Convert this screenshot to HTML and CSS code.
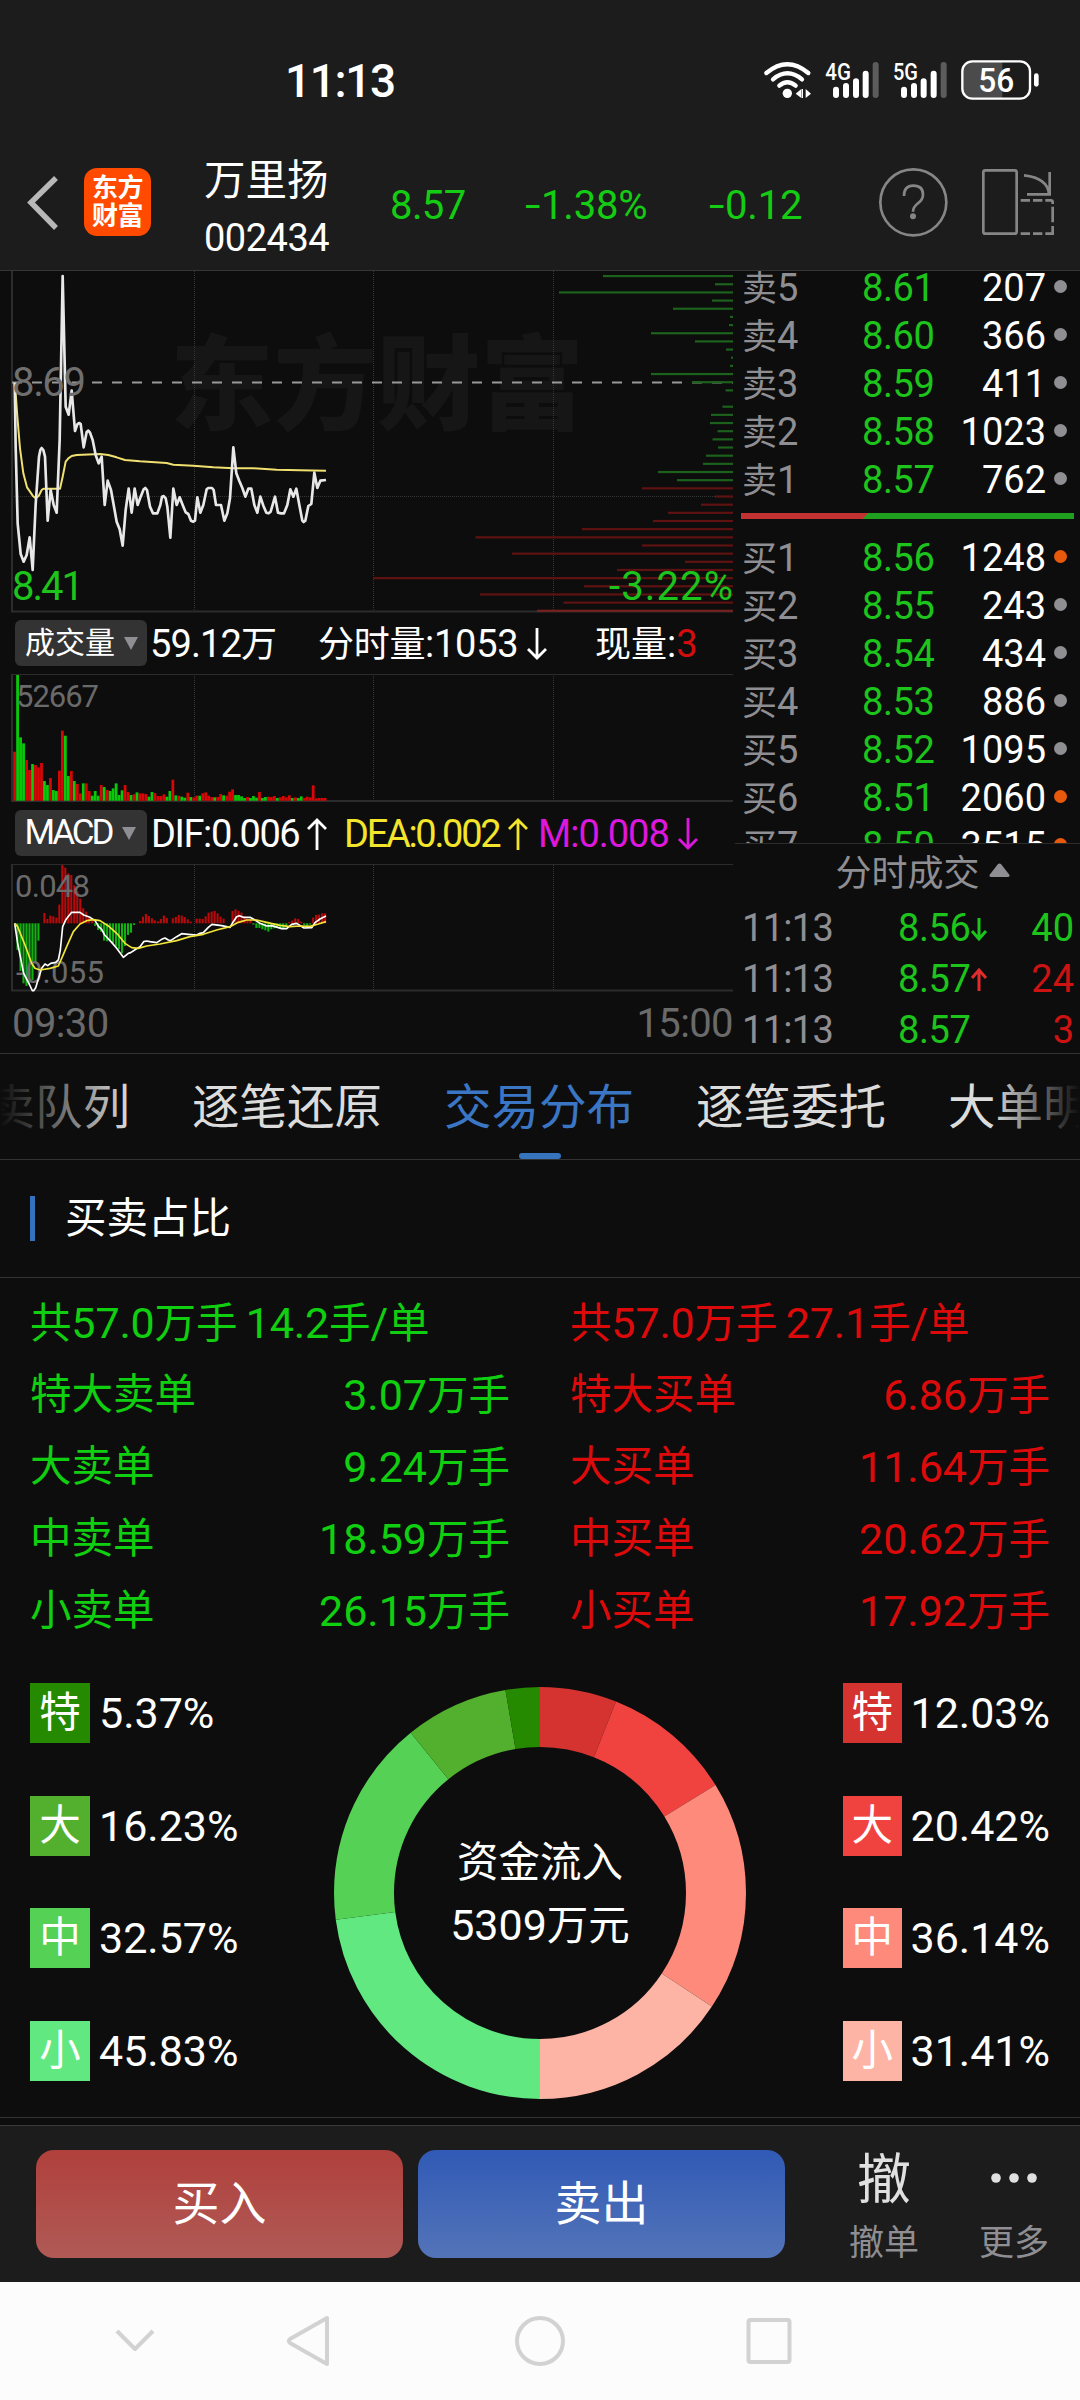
FILE: index.html
```html
<!DOCTYPE html>
<html lang="zh-CN">
<head>
<meta charset="utf-8">
<title>万里扬 002434</title>
<link rel="stylesheet" href="styles.css">
</head>
<body>
<div class="status">
  <span class="clock">11:13</span>
  <svg class="status-icons" viewBox="0 0 870 180">
    <g fill="none" stroke="#fff" stroke-width="13" stroke-linecap="round">
      <path d="M49 69Q112 16 175 69"/><path d="M69 88Q112 52 156 88"/><path d="M88 107Q112 86 137 107"/>
    </g>
    <circle cx="112" cy="130" r="14" fill="#fff"/>
    <path d="M137 131l17-14v27zM167 117l16 14l-16 13z" fill="#fff"/>
    <path d="M157 117v27" stroke="#fff" stroke-width="4"/>
    <g stroke="#fff" stroke-width="18" stroke-linecap="round">
      <path d="M258 119v16M288 108v27M318 94v41M347 71v64M462 119v16M492 108v27M521 94v41M551 71v64"/>
      <path stroke="#5c5c5c" d="M377 45v90M581 45v90"/>
    </g>
    <text class="net" x="226" y="90" textLength="77" lengthAdjust="spacingAndGlyphs">4G</text>
    <text class="net" x="429" y="90" textLength="75" lengthAdjust="spacingAndGlyphs">5G</text>
    <path d="M670 33h87v114h-87q-33 0-33-33v-48q0-33 33-33z" fill="#4b4b4b"/>
    <rect x="637" y="34" width="203" height="112" rx="30" fill="none" stroke="#fff" stroke-width="7"/>
    <path d="M859 77v26" stroke="#fff" stroke-width="14" stroke-linecap="round"/>
    <text class="batt" x="739" y="126" text-anchor="middle" textLength="108" lengthAdjust="spacingAndGlyphs">56</text>
  </svg>
</div>

<header class="head">
  <svg class="back" viewBox="0 0 84 136"><path d="M56 44L31 68.500L56 94" fill="none" stroke="#b8b8b8" stroke-width="5.500"/></svg>
  <div class="logo"><span>东方</span><span>财富</span></div>
  <div class="stock"><span class="name">万里扬</span><span class="code">002434</span></div>
  <span class="quote q1">8.57</span>
  <span class="quote q2"><span>-</span>1.38%</span>
  <span class="quote q3"><span>-</span>0.12</span>
  <svg class="head-icons" viewBox="360 252 630 408" fill="none" stroke="#868686" stroke-width="8">
    <circle cx="490" cy="457" r="99"/>
    <path d="M462 438Q462 407 490 407Q519 407 519 434Q519 448 504 460Q489 472 489 485"/>
    <circle cx="489" cy="499" r="9" fill="#868686" stroke="none"/>
    <rect x="700" y="361" width="100" height="190" rx="6"/>
    <path d="M822 376Q894 384 897 433M899 366V433H831"/>
    <path d="M812 451H840M849 451H877M886 451H902Q908 451 908 457V462M908 470V490M908 490V517M908 528V551H886M877 551H849M840 551H812"/>
  </svg>
</header>

<main class="market">
  <section class="charts">
    <svg class="price-chart" viewBox="0 0 735 342">
      <text class="mark" x="170" y="151">东方财富</text>
      <g class="grid"><path d="M194.500 0V339M373.500 0V339M553.500 0V339M12 225.500H733"/></g>
      <path class="frame" d="M12 0V340.500H733"/>
      <path d="M12 111.500H733" stroke="#999" stroke-width="2.200" stroke-dasharray="10 10"/>
      <g id="ladder"></g>
      <g transform="translate(0 -11) scale(.33333)" fill="none" stroke-linejoin="round">
        <path stroke="#f0e070" stroke-width="6" d="M44 375L47 400L52 470L60 565L70 640L81 682L90 695L98 707L107 715L116 708L125 690L130 686H180L188 650L197 605L205 595L215 588L230 585L300 582L325 585L350 592L375 600L420 604L500 609L520 614L580 617L640 622L700 625L760 625L830 629L900 631L978 632"/>
        <path stroke="#e8e8e8" stroke-width="8" d="M44 368L47 560L53 790L62 882L71 905L80 885L89 832L98 930L107 733L117 590L121 570L125 564L130 570L135 590L143 782L152 690L161 735L170 758L179 540L188 48L197 440L206 464L215 392L225 513L232 493L237 489L242 492L251 562L260 516L265 512L270 518L278 540L287 585L296 610L305 590L314 735L323 662L333 690L342 740L350 785L359 808L368 857L377 750L386 686L395 758L404 686L413 735L422 710L431 688L436 684L441 690L450 740L459 760H472L481 735L486 710L491 708L497 715L502 740L511 833L520 686L530 735L539 712L548 735L557 757L565 762L573 782L580 785L585 782L592 712L601 758L610 735L620 688L625 684H636L641 690L648 735H663L673 782L682 760L690 715L700 562L709 640L718 663L727 684L736 710L745 686H754L763 735L772 758L781 710L790 737L799 758L806 760L812 755L825 710L834 758L843 760H852L862 735L871 688L880 710L889 686L898 735L907 782L911 786L916 782L925 738L934 732L943 638L952 684L961 662L978 660"/>
      </g>
      <text class="axis" x="12" y="125" textLength="74">8.69</text>
      <text class="axis low" x="12" y="329" textLength="72">8.41</text>
      <text class="axis low" x="609" y="329" textLength="124">-3.22%</text>
    </svg>

    <div class="tagrow">
      <button class="tag">成交量<i></i></button>
      <span class="vol">59.12<b>万</b></span>
      <span class="minute"><b>分时量</b>:1053<svg class="arr" viewBox="0 0 20 32"><path d="M10 0V30M1 21L10 30L19 21"/></svg></span>
      <span class="now"><b>现量</b>:<em>3</em></span>
    </div>

    <svg class="vol-chart" viewBox="0 0 735 130">
      <g class="grid"><path d="M194.500 1V127M373.500 1V127M553.500 1V127"/></g>
      <path class="frame thin" d="M12 1.500H733"/><path class="frame" d="M12 1V128H733"/>
      <g id="volume"></g>
      <text class="scale" x="16" y="34" textLength="83">52667</text>
    </svg>

    <div class="tagrow">
      <button class="tag macd"><span>MACD</span><i></i></button>
      <span class="dif">DIF:0.006<svg class="arr" viewBox="0 0 20 32"><path d="M10 32V2M1 11L10 2L19 11"/></svg></span>
      <span class="dea">DEA:0.002<svg class="arr" viewBox="0 0 20 32"><path d="M10 32V2M1 11L10 2L19 11"/></svg></span>
      <span class="m">M:0.008<svg class="arr" viewBox="0 0 20 32"><path d="M10 0V30M1 21L10 30L19 21"/></svg></span>
    </div>

    <svg class="macd-chart" viewBox="0 0 735 129">
      <g class="grid"><path d="M194.500 2V127M373.500 2V127M553.500 2V127"/></g>
      <path class="frame thin" d="M12 1.500H733"/><path class="frame" d="M12 1V127.500H733"/>
      <g id="macd"></g>
      <text class="scale" x="15" y="34" textLength="75">0.048</text>
      <text class="scale" x="16" y="120" textLength="88">-0.055</text>
      <g transform="translate(0 -253) scale(.33333)" fill="none" stroke-width="5" stroke-linejoin="round">
        <path stroke="#fff" d="M44 940L53 1000L71 1090L89 1125L97 1142H101L107 1133L125 1075L135 1062L143 1067L152 1060L167 1057L175 1050L181 1020L188 950L197 930L206 918L215 907H240L251 915L270 922L285 932L296 950L305 958L314 975L333 995L350 1015L370 1042L385 1030L392 1028L404 1020L420 1010L431 995L440 993L450 995L470 998L485 988L495 984L505 990L512 992L530 980L545 971L565 973L590 975L600 970L610 968L625 952L636 943L665 947L690 952L700 935L710 920L718 917L730 922H750L765 930L780 940L800 948L815 947L845 956H860L875 943L890 940L912 954L935 953L945 938L960 927L978 918"/>
        <path stroke="#f2e53a" d="M44 940L53 950L62 973L75 1005L95 1060L105 1075L120 1080L150 1075L175 1068L185 1045L200 1010L220 965L240 942L260 932L280 929L300 932L325 948L350 970L375 1000L395 1013L415 1015L440 1008L480 1002L530 992L570 980L610 973L650 960L690 950L715 937L740 930H770L800 937L840 946L870 950L900 948L930 949L955 942L978 935"/>
      </g>
    </svg>
    <div class="times"><span>09:30</span><span>15:00</span></div>
  </section>

  <aside class="side">
    <div class="book">
      <div class="lv"><span><b>卖</b>5</span><span>8.61</span><span>207</span><i></i></div>
      <div class="lv"><span><b>卖</b>4</span><span>8.60</span><span>366</span><i></i></div>
      <div class="lv"><span><b>卖</b>3</span><span>8.59</span><span>411</span><i></i></div>
      <div class="lv"><span><b>卖</b>2</span><span>8.58</span><span>1023</span><i></i></div>
      <div class="lv"><span><b>卖</b>1</span><span>8.57</span><span>762</span><i></i></div>
      <div class="ratio"></div>
      <div class="lv"><span><b>买</b>1</span><span>8.56</span><span>1248</span><i class="hot"></i></div>
      <div class="lv"><span><b>买</b>2</span><span>8.55</span><span>243</span><i></i></div>
      <div class="lv"><span><b>买</b>3</span><span>8.54</span><span>434</span><i></i></div>
      <div class="lv"><span><b>买</b>4</span><span>8.53</span><span>886</span><i></i></div>
      <div class="lv"><span><b>买</b>5</span><span>8.52</span><span>1095</span><i></i></div>
      <div class="lv"><span><b>买</b>6</span><span>8.51</span><span>2060</span><i class="hot"></i></div>
      <div class="lv"><span><b>买</b>7</span><span>8.50</span><span>3515</span><i class="hot"></i></div>
    </div>
    <div class="ticks-head">分时成交<svg viewBox="0 0 21 14"><path d="M9 1Q10.500 0 12 1L20.500 12Q21 14 19 14H2Q0 14 .5 12Z" fill="#8e8e93"/></svg></div>
    <div class="tick"><span>11:13</span><span>8.56</span><svg class="ta" viewBox="0 0 18 24"><path d="M9 1V22M2 14L9 22L16 14"/></svg><span class="buy0">40</span></div>
    <div class="tick"><span>11:13</span><span>8.57</span><svg class="ta up" viewBox="0 0 18 24"><path d="M9 23V2M2 10L9 2L16 10"/></svg><span class="buy1">24</span></div>
    <div class="tick"><span>11:13</span><span>8.57</span><i></i><span class="buy1">3</span></div>
  </aside>
</main>

<nav class="tabs">
  <span>买卖队列</span><span>逐笔还原</span><span class="on">交易分布</span><span>逐笔委托</span><span>大单明细</span>
</nav>

<h2 class="title">买卖占比</h2>

<section class="summary">
  <div class="col sell">
    <div class="total"><b>共</b>57.0<b>万手</b> 14.2<b>手</b>/<b>单</b></div>
    <div><b>特大卖单</b><span>3.07<b>万手</b></span></div>
    <div><b>大卖单</b><span>9.24<b>万手</b></span></div>
    <div><b>中卖单</b><span>18.59<b>万手</b></span></div>
    <div><b>小卖单</b><span>26.15<b>万手</b></span></div>
  </div>
  <div class="col buy">
    <div class="total"><b>共</b>57.0<b>万手</b> 27.1<b>手</b>/<b>单</b></div>
    <div><b>特大买单</b><span>6.86<b>万手</b></span></div>
    <div><b>大买单</b><span>11.64<b>万手</b></span></div>
    <div><b>中买单</b><span>20.62<b>万手</b></span></div>
    <div><b>小买单</b><span>17.92<b>万手</b></span></div>
  </div>
</section>

<section class="flow">
  <div class="legend">
    <div><b class="s1">特</b>5.37%</div>
    <div><b class="s2">大</b>16.23%</div>
    <div><b class="s3">中</b>32.57%</div>
    <div><b class="s4">小</b>45.83%</div>
  </div>
  <div class="donut">
    <svg viewBox="-206 -206 412 412" fill="none" stroke-width="60">
      <g transform="rotate(-90)">
        <circle r="176" pathLength="200" stroke="#d43330" stroke-dasharray="12.030 200"/>
        <circle r="176" pathLength="200" stroke="#f04340" stroke-dasharray="20.420 200" stroke-dashoffset="-12.030"/>
        <circle r="176" pathLength="200" stroke="#fe8a7b" stroke-dasharray="36.140 200" stroke-dashoffset="-32.450"/>
        <circle r="176" pathLength="200" stroke="#feb4a4" stroke-dasharray="31.410 200" stroke-dashoffset="-68.590"/>
        <circle r="176" pathLength="200" stroke="#62e880" stroke-dasharray="45.830 200" stroke-dashoffset="-100"/>
        <circle r="176" pathLength="200" stroke="#55d155" stroke-dasharray="32.570 200" stroke-dashoffset="-145.830"/>
        <circle r="176" pathLength="200" stroke="#52b02e" stroke-dasharray="16.230 200" stroke-dashoffset="-178.400"/>
        <circle r="176" pathLength="200" stroke="#268a00" stroke-dasharray="5.370 200" stroke-dashoffset="-194.630"/>
      </g>
    </svg>
    <p class="net-in"><b>资金流入</b><span>5309<b>万元</b></span></p>
  </div>
  <div class="legend right">
    <div><b class="b1">特</b>12.03%</div>
    <div><b class="b2">大</b>20.42%</div>
    <div><b class="b3">中</b>36.14%</div>
    <div><b class="b4">小</b>31.41%</div>
  </div>
</section>

<footer class="actions">
  <button class="act buy-btn">买入</button>
  <button class="act sell-btn">卖出</button>
  <div class="mini"><span class="glyph">撤</span><span>撤单</span></div>
  <div class="mini"><svg class="dots" viewBox="0 0 48 12" fill="#e0e0e0"><circle cx="6" cy="6" r="4.800"/><circle cx="24" cy="6" r="4.800"/><circle cx="42" cy="6" r="4.800"/></svg><span>更多</span></div>
</footer>

<div class="sysnav">
  <svg viewBox="0 0 1080 118" fill="none" stroke="#d2d2d2" stroke-width="4" stroke-linejoin="round">
    <path d="M117 49L135 67L153 49"/>
    <path d="M327 36V82L290 61Q287.500 59 290 57Z"/>
    <circle cx="540" cy="59" r="23"/>
    <rect x="748.500" y="38" width="41" height="42" rx="2"/>
  </svg>
</div>
<script src="charts.js"></script>
</body>
</html>
```

FILE: styles.css
```css
* { box-sizing: border-box; }
body {
  margin: 0;
  width: 1080px;
  height: 2400px;
  overflow: hidden;
  background: #0d0d0d;
  color: #fff;
  font-family: Roboto, "Noto Sans CJK SC", sans-serif;
  display: flex;
  flex-direction: column;
}
b { font-weight: 400; line-height: 1; }
button { border: 0; margin: 0; padding: 0; color: #fff; font: inherit; }
svg { display: block; flex: none; }
body > * { flex: none; }

/* status bar */
.status {
  height: 134px;
  padding: 27px 40px 0 285px;
  background: #1c1c1c;
  display: flex;
  align-items: center;
  justify-content: space-between;
}
.clock { font-size: 46px; font-weight: 500; line-height: 60px; letter-spacing: -1.400px; }
.status-icons { width: 290px; height: 60px; margin-top: -1px; }
.net { font-size: 72px; font-weight: 500; fill: #fff; }
.batt { font-size: 100px; font-weight: 500; fill: #fff; }

/* stock header */
.head {
  height: 137px;
  background: #1c1c1c;
  border-bottom: 1px solid #363636;
  display: grid;
  grid-template-columns: 84px 67px 53px 186px 135px 184px 161px 210px;
  align-items: center;
}
.back { width: 84px; height: 136px; }
.logo {
  width: 67px;
  height: 68px;
  border-radius: 13px;
  background: #ff4a00;
  display: flex;
  flex-direction: column;
  justify-content: center;
  align-items: center;
  font-size: 26px;
  font-weight: 700;
  line-height: 28px;
}
.logo span { letter-spacing: -.5px; }
.stock { grid-column: 4; display: flex; flex-direction: column; padding-top: 14px; }
.name { font-size: 41.500px; line-height: 58px; margin-bottom: -1px; }
.code { font-size: 38px; line-height: 58px; letter-spacing: -.5px; }
.quote { color: #14cc14; font-size: 40px; line-height: 60px; padding-top: 7px; letter-spacing: -.2px; }
.quote span { display: inline-block; width: 16px; transform: scaleX(1.400); transform-origin: 0 50%; }
.q1 { letter-spacing: -.6px; }
.head-icons { width: 210px; height: 136px; }

/* charts */
.market { height: 783px; display: flex; border-bottom: 1px solid #333; }
.charts { width: 735px; height: 782px; display: flex; flex-direction: column; }
.price-chart { width: 735px; height: 342px; }
.vol-chart { width: 735px; height: 130px; }
.macd-chart { width: 735px; height: 129px; }
.grid { fill: none; stroke: #363636; stroke-dasharray: 1 1; }
.frame { fill: none; stroke: #2c2c2c; stroke-width: 2; }
.frame.thin { stroke-width: 1; }
.mark { font-size: 103.500px; font-weight: 900; fill: #161616; }
.axis { font-size: 40px; fill: #6f6f6f; }
.axis.low { fill: #1cc41c; }
.scale { font-size: 31px; fill: #6a6a6a; }
.vg { fill: #0ac80a; }
.vr { fill: #d80606; }
.mg { fill: #12b012; }
.mr { fill: #b80a0a; }
.tagrow {
  height: 60px;
  padding: 1px 0 0 15px;
  display: flex;
  align-items: center;
  font-size: 38px;
  line-height: 50px;
  white-space: nowrap;
}
.tagrow b { font-size: 36px; }
.tag {
  width: 132px;
  height: 46px;
  margin-top: -1px;
  padding-left: 10px;
  border-radius: 6px;
  background: #333;
  display: flex;
  align-items: center;
  gap: 9px;
  font-size: 30px;
  line-height: 46px;
}
.tag i { border: 7px solid transparent; border-top: 13px solid #8e8e93; border-bottom: 0; }
.tag.macd span { font-size: 35px; width: 90px; margin-left: -2px; letter-spacing: -3.100px; }
.vol { width: 168px; margin-left: 3px; letter-spacing: -.9px; }
.minute { width: 277px; letter-spacing: -.3px; }
.now em { font-style: normal; color: #d20d0d; }
.arr {
  display: inline-block;
  width: 20px;
  height: 32px;
  margin-left: 9px;
  vertical-align: -3px;
  fill: none;
  stroke: currentColor;
  stroke-width: 2.800px;
}
.dif { width: 193px; margin-left: 4px; letter-spacing: -1.400px; }
.dea { width: 194px; color: #f2e52c; letter-spacing: -2.300px; }
.dif .arr { margin-left: 8px; }
.m { color: #dd17dd; letter-spacing: -1px; }
.times {
  height: 61px;
  padding: 1px 2px 0 12px;
  display: flex;
  justify-content: space-between;
  font-size: 40px;
  line-height: 61px;
  letter-spacing: -.6px;
  color: #6a6a6a;
}

/* order book */
.side { width: 345px; height: 782px; overflow: hidden; }
.book { height: 573px; padding-left: 6px; overflow: hidden; border-bottom: 1px solid #2c2c2c; }
.book::before { content: ""; display: block; margin-top: -8px; }
.lv {
  height: 48px;
  display: grid;
  grid-template-columns: 120px 80px 1fr 28px;
  align-items: center;
  padding: 0 6px 0 1px;
  font-size: 38px;
  line-height: 50px;
}
.lv b { font-size: 35px; }
.lv span:nth-child(1) { color: #8e8e93; }
.lv span:nth-child(2) { color: #1cc41c; letter-spacing: -.4px; }
.lv span:nth-child(3) { text-align: right; }
.lv i { width: 13px; height: 13px; border-radius: 50%; background: #8e8e93; margin: 0 0 4px 8px; }
.lv i.hot { background: #e8590c; }
.ratio {
  width: 333px;
  height: 6px;
  margin: 10px 0 14px;
  background: linear-gradient(135deg, #c23232 90px, #1fa01f 90.500px);
}
.ticks-head {
  height: 58px;
  padding: 2px 5px 0 35px;
  display: flex;
  justify-content: center;
  align-items: center;
  gap: 9px;
  font-size: 36px;
  line-height: 58px;
  color: #8e8e93;
}
.ticks-head svg { width: 21px; height: 14px; margin-bottom: 8px; }
.tick {
  height: 51px;
  display: grid;
  grid-template-columns: 156px 72px 18px 1fr;
  align-items: center;
  padding: 0 6px 0 7px;
  font-size: 38px;
  line-height: 53px;
}
.tick span:nth-child(1) { color: #8e8e93; letter-spacing: -.7px; }
.tick span:nth-child(2) { color: #1cc41c; letter-spacing: -.4px; }
.tick span:last-child { text-align: right; }
.ta { width: 18px; height: 24px; fill: none; stroke: #1cc41c; stroke-width: 3px; }
.ta.up { stroke: #e02c2c; }
.buy0 { color: #1cc41c; }
.buy1 { color: #cd1212; }

/* tabs */
.tabs {
  position: relative;
  height: 106px;
  border-bottom: 1px solid #333;
  display: flex;
  gap: 62px;
  overflow: hidden;
  font-size: 47.500px;
  line-height: 109px;
  color: #dcdcdc;
  white-space: nowrap;
}
.tabs span { flex: none; height: 105px; }
.tabs span:first-child { margin-left: -60px; }
.tabs::before, .tabs::after {
  content: "";
  position: absolute;
  z-index: 1;
  top: 0;
  width: 130px;
  height: 105px;
}
.tabs::before { left: 0; background: linear-gradient(90deg, #0d0d0d, rgba(13, 13, 13, 0)); }
.tabs::after { right: 0; width: 90px; background: linear-gradient(270deg, #0d0d0d, rgba(13, 13, 13, 0)); }
.on { position: relative; color: #3a76c4; }
.on::after {
  content: "";
  position: absolute;
  left: 75px;
  bottom: 0;
  width: 42px;
  height: 6px;
  border-radius: 3px;
  background: #3674bd;
}

.title {
  height: 118px;
  margin: 0;
  padding-left: 30px;
  border-bottom: 1px solid #333;
  display: flex;
  align-items: center;
  gap: 30px;
  font-size: 41.500px;
  font-weight: 400;
  line-height: 114px;
}
.title::before { content: ""; width: 5px; height: 45px; background: #3472bf; }

/* sell / buy totals */
.summary {
  padding: 9px 30px 0;
  display: grid;
  grid-template-columns: 1fr 1fr;
  gap: 60px;
  font-size: 43px;
}
.col div { height: 72px; line-height: 72px; display: flex; justify-content: space-between; }
.col b { font-size: 41.500px; line-height: inherit; }
.col .total { display: block; word-spacing: -2px; letter-spacing: -.15px; }
.sell { color: #10cf10; }
.buy { color: #dc0a0a; }

/* donut */
.flow { height: 471px; padding: 36px 30px 0; border-bottom: 1px solid #333; display: flex; }
.flow > * { flex: none; }
.legend { width: 304px; height: 398px; display: flex; flex-direction: column; justify-content: space-between; }
.legend div { height: 60px; display: flex; align-items: center; gap: 9px; font-size: 43px; line-height: 62px; }
.legend b { width: 60px; height: 60px; line-height: 60px; text-align: center; font-size: 41.500px; }
.legend.right { width: 207px; margin-left: 97px; }
.s1 { background: #268a00; }
.s2 { background: #52b02e; }
.s3 { background: #55d155; }
.s4 { background: #62e880; }
.b1 { background: #d43330; }
.b2 { background: #f04340; }
.b3 { background: #fe8a7b; }
.b4 { background: #feb4a4; }
.donut { position: relative; width: 412px; height: 412px; margin: 4px 0 0; }
.net-in {
  position: absolute;
  inset: 0;
  margin: 0;
  padding-top: 2px;
  display: flex;
  flex-direction: column;
  align-items: center;
  justify-content: center;
  font-size: 43px;
  line-height: 63px;
}
.net-in b { font-size: 41.500px; line-height: 63px; }

/* action bar */
.actions {
  height: 157px;
  margin-top: 7px;
  padding: 0 0 0 36px;
  background: #1c1c1c;
  border-top: 1px solid #3a3a3a;
  display: flex;
  align-items: center;
}
.act { flex: none; width: 367px; height: 108px; margin-right: 15px; border-radius: 18px; font-size: 47px; line-height: 108px; }
.buy-btn { background: linear-gradient(#b0403c, #b05a56); }
.sell-btn { background: linear-gradient(#305ab6, #5474b8); margin-right: 34px; }
.mini {
  flex: none;
  width: 130px;
  height: 120px;
  padding-top: 2px;
  margin-bottom: -4px;
  display: flex;
  flex-direction: column;
  align-items: center;
  justify-content: space-between;
  font-size: 35px;
  line-height: 44px;
  color: #8e8e93;
}
.glyph { font-size: 54px; line-height: 66px; color: #e0e0e0; }
.dots { width: 48px; height: 12px; margin-top: 24px; }

.sysnav { height: 118px; background: #fcfcfc; }
.sysnav svg { width: 1080px; height: 118px; }
```

FILE: charts.js
```js
const NS = "http://www.w3.org/2000/svg";
function bar(group, x, y, w, h, cls) {
  const r = document.createElementNS(NS, "rect");
  r.setAttribute("x", x);
  r.setAttribute("y", y);
  r.setAttribute("width", w);
  r.setAttribute("height", h);
  if (cls[0] === "#") r.setAttribute("fill", cls);
  else r.setAttribute("class", cls);
  group.appendChild(r);
}

// Volume by price, one row per cent, drawn from the right edge.
const ladder = [130, 18, 174, 21, 60, 3, 4, 82, 38, 7, 2, 3, 82, 41, 7.5, 0, 10.500, 22, 23, 15.500, 20.500, 15,
  27, 30, 75, 56, 91, 18, 32, 65, 80, 151, 257.500, 91, 221, 48, 116, 360, 149, 253, 169.500, 196];
const lg = document.getElementById("ladder");
ladder.forEach((w, i) => {
  const last = i === ladder.length - 1;
  bar(lg, 733 - w, 4 + i * 8.163, w, 2.200, i < 26 ? "#1c611c" : last ? "#762020" : "#5e1212");
});

// Per-minute volume: direction and height in thirds of a pixel.
const volume = "r147 g377 g190 g172 r122 r92 g110 r107 r100 r113 g59 g47 r68 g32 g29 r90 r210 g195 g74 r89 g59 r50 r22 g52 r52 r29 g15 g29 g15 r47 g41 r32 g29 g37 g52 g17 g31 r47 r26 g17 r19 g25 r22 r22 r20 g12 g26 r23 r14 r14 r19 g12 g29 r63 g16 r15 g12 g9 r24 g11 r10 r15 g15 r22 r25 r15 r11 g10 r11 r20 g16 r15 r27 r34 g17 g17 g13 g8 r11 g8 g14 g9 r26 g8 g11 r12 r11 r14 g8 r10 r14 r10 r16 g8 r10 g8 g13 r8 r12 r10 r46 r7 r8 r8 r8".split(" ");
const vg = document.getElementById("volume");
volume.forEach((v, i) => {
  const h = v.slice(1) / 3;
  bar(vg, 13.200 + i * 2.986, 127.700 - h, 2.800, h, "v" + v[0]);
});

// MACD histogram: signed height in thirds of a pixel around zero.
const macd = [0, -80, -143, -180, -188, -178, -170, -120, -52, 0, 31, 13, 23, 21, 17, 56, 175, 167, 150, 145, 114, 97, 74,
  45, 35, 20, 8, -8, -20, -25, -52, -54, -54, -60, -70, -78, -90, -68, -35, -28, -5, 0, 7, 20, 28, 22, 15, 9, 6, 13, 23,
  16, 0, 15, 19, 25, 23, 19, 12, 5, 0, 14, 14, 13, 21, 32, 35, 37, 30, 20, 14, 0, 0, 37, 42, 38, 32, 21, 14, 13, -4,
  -14, -14, -18, -21, -25, -18, -15, -11, -15, -18, -12, 4, 8, 15, 13, 5, -5, -8, -4, 17, 25, 26, 30, 30];
const mg = document.getElementById("macd");
macd.forEach((v, i) => {
  const h = Math.abs(v) / 3;
  if (h) bar(mg, 13.500 + i * 2.986, v > 0 ? 60.300 - h : 60.300, 2.100, h, v > 0 ? "mr" : "mg");
});
```
